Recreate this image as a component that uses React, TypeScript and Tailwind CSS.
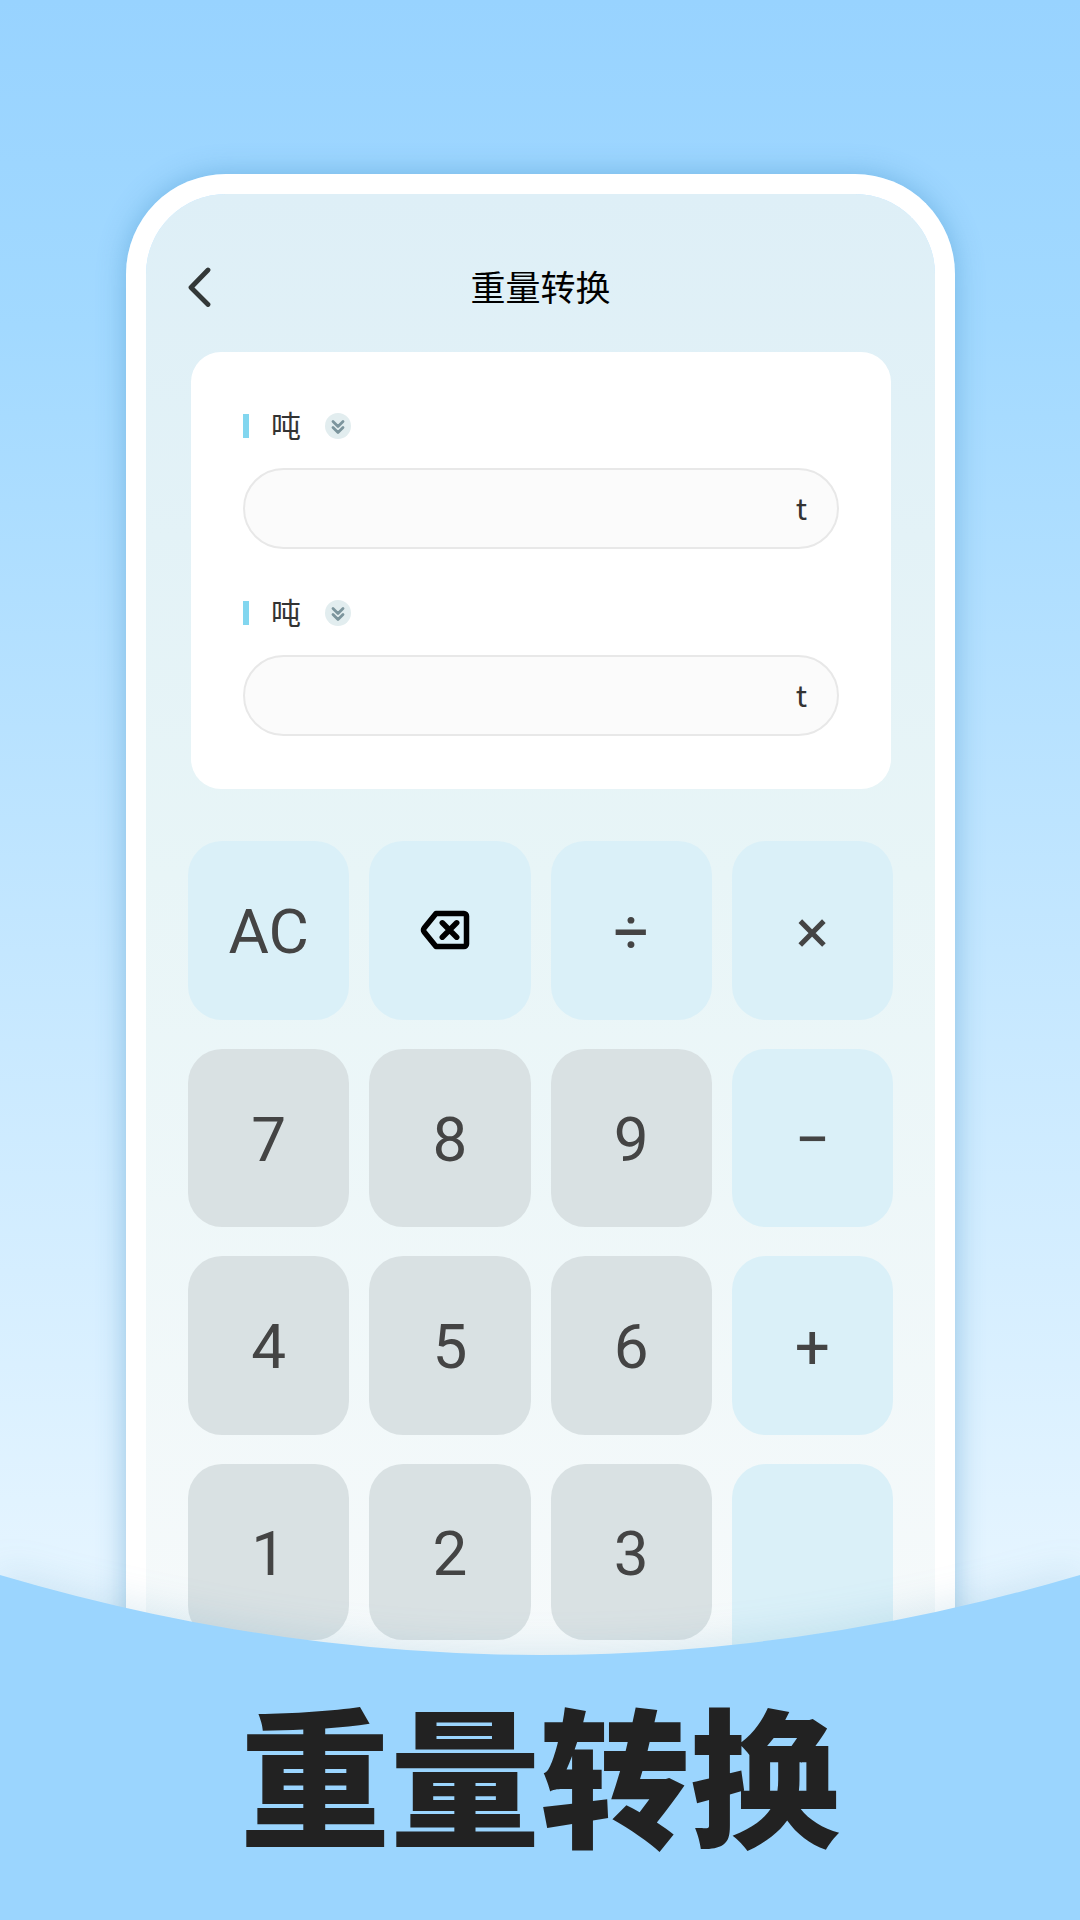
import { useState } from "react";
import clsx from "clsx";

type Key = {
  label: string;
  value?: string;
  accent?: boolean;
  tall?: boolean;
};

const UNITS = [{ name: "吨", symbol: "t" }];

const KEYS: Key[] = [
  { label: "AC", value: "AC", accent: true },
  { label: "退格", accent: true },
  { label: "÷", value: "÷", accent: true },
  { label: "×", value: "×", accent: true },
  { label: "7", value: "7" },
  { label: "8", value: "8" },
  { label: "9", value: "9" },
  { label: "−", value: "−", accent: true },
  { label: "4", value: "4" },
  { label: "5", value: "5" },
  { label: "6", value: "6" },
  { label: "+", value: "+", accent: true },
  { label: "1", value: "1" },
  { label: "2", value: "2" },
  { label: "3", value: "3" },
  { label: "等于", accent: true, tall: true },
];

function BackIcon() {
  return (
    <svg viewBox="0 0 24 40" className="h-10 w-6" fill="none" aria-hidden="true">
      <path
        d="M20 3 3 20.500l17 17"
        stroke="#333838"
        strokeWidth="4.800"
        strokeLinecap="round"
        strokeLinejoin="round"
      />
    </svg>
  );
}

function BackspaceIcon() {
  return (
    <svg viewBox="0 0 60 44" className="h-11 w-[60px]" fill="none" aria-hidden="true">
      <path
        d="M16 3.500h28a2.500 2.500 0 0 1 2.500 2.500v28a2.500 2.500 0 0 1-2.500 2.500H16L4.200 22a3.500 3.500 0 0 1 0-4Z"
        stroke="#000"
        strokeWidth="5.500"
        strokeLinejoin="round"
      />
      <path
        d="m22.300 12.800 14.400 14.400m0-14.400-14.400 14.400"
        stroke="#000"
        strokeWidth="5.500"
        strokeLinecap="round"
      />
    </svg>
  );
}

function UnitRow({
  title,
  value,
  onChange,
}: {
  title: string;
  value: string;
  onChange: (v: string) => void;
}) {
  const [unit, setUnit] = useState(UNITS[0]);

  return (
    <div>
      <div className="flex h-10 items-center">
        <span className="mr-[22px] h-6 w-1.5 bg-[#82d6ef]" />
        <select
          aria-label={`${title}单位`}
          value={unit.name}
          onChange={(e) =>
            setUnit(UNITS.find((u) => u.name === e.target.value) ?? UNITS[0])
          }
          className="appearance-none bg-transparent pb-[5px] text-[30px] leading-10 text-[#333] outline-none"
        >
          {UNITS.map((u) => (
            <option key={u.name}>{u.name}</option>
          ))}
        </select>
        <span className="ml-6 grid size-[26px] place-items-center rounded-full bg-[#e2edef]">
          <svg viewBox="0 0 26 26" className="size-[26px]" fill="none" aria-hidden="true">
            <path
              d="m8 8.500 5 5 5-5M8 14.500l5 5 5-5"
              stroke="#7c959d"
              strokeWidth="2.800"
              strokeLinecap="round"
              strokeLinejoin="round"
            />
          </svg>
        </span>
      </div>
      <div className="mt-[22px] flex h-[81px] items-center rounded-full border-2 border-[#e8e8e8] bg-[#fbfbfb] px-[30px] pb-[3px]">
        <input
          aria-label={title}
          inputMode="decimal"
          value={value}
          onChange={(e) => onChange(e.target.value)}
          className="min-w-0 flex-1 bg-transparent text-right text-[30px] text-[#333] outline-none"
        />
        <span className="text-[30px] leading-10 text-[#333]">{unit.symbol}</span>
      </div>
    </div>
  );
}

export default function App() {
  const [from, setFrom] = useState("");
  const [to, setTo] = useState("");

  function press(key: Key) {
    if (key.value === "AC") {
      setFrom("");
      setTo("");
    } else if (key.label === "退格") {
      setFrom((v) => v.slice(0, -1));
    } else if (key.tall) {
      setTo(from);
    } else {
      setFrom((v) => v + key.value);
    }
  }

  return (
    <div className="flex min-h-screen flex-col overflow-hidden bg-linear-to-b from-[#98d3ff] via-[#a2d9ff] via-17% to-[#e6f5ff] to-83% pt-[174px] font-['Noto_Sans_CJK_SC',sans-serif]">
      <main className="mr-[125px] ml-[126px] rounded-t-[100px] border-[20px] border-b-0 border-white bg-linear-to-b from-[#deeff7] via-[#e8f5f7] via-45% to-[#f7fafb] bg-clip-padding shadow-[0_0_28px_rgba(60,140,195,0.45)]">
        <header className="grid h-[158px] grid-cols-[1fr_auto_1fr] items-center px-[42px] pt-7">
          <button type="button" aria-label="返回" className="justify-self-start">
            <BackIcon />
          </button>
          <h1 className="pb-[3px] text-[35px] leading-[44px] text-black">重量转换</h1>
        </header>

        <section className="mr-[44px] ml-[45px] flex flex-col gap-11 rounded-[30px] bg-white px-[52px] pt-[54px] pb-[53px]">
          <UnitRow title="输入" value={from} onChange={setFrom} />
          <UnitRow title="结果" value={to} onChange={setTo} />
        </section>

        <section className="grid grid-cols-4 grid-rows-[179px_178px_179px_176px_30px] gap-x-5 gap-y-[29px] px-[42px] pt-[52px]">
          {KEYS.map((key) => (
            <button
              key={key.label}
              type="button"
              aria-label={key.label}
              onClick={() => press(key)}
              className={clsx(
                "flex items-center justify-center rounded-[34px] pt-[3px] font-['Roboto',sans-serif] text-[62px] leading-[72px] text-[#444]",
                key.accent ? "bg-[#daf0f8]" : "bg-[#d9e1e3]",
                key.tall && "row-span-2",
              )}
            >
              {key.label === "退格" ? <BackspaceIcon /> : key.value}
            </button>
          ))}
        </section>
      </main>

      {/* the curved edge drops a soft shade on the phone above it */}
      <footer className="relative -mt-[124px] flex flex-1 flex-col drop-shadow-[0_-6px_18px_rgba(60,140,180,0.15)]">
        <svg
          viewBox="0 0 1080 82"
          preserveAspectRatio="none"
          className="block h-[82px] w-full"
          aria-hidden="true"
        >
          <path d="M0 0Q540 160 1080 0V82H0Z" fill="#9bd5fe" />
        </svg>
        <div className="flex-1 bg-[#9bd5fe] pt-6 pb-[50px] text-center">
          <h2 className="text-[150px] leading-[180px] font-black text-[#222]">
            重量转换
          </h2>
        </div>
      </footer>
    </div>
  );
}
